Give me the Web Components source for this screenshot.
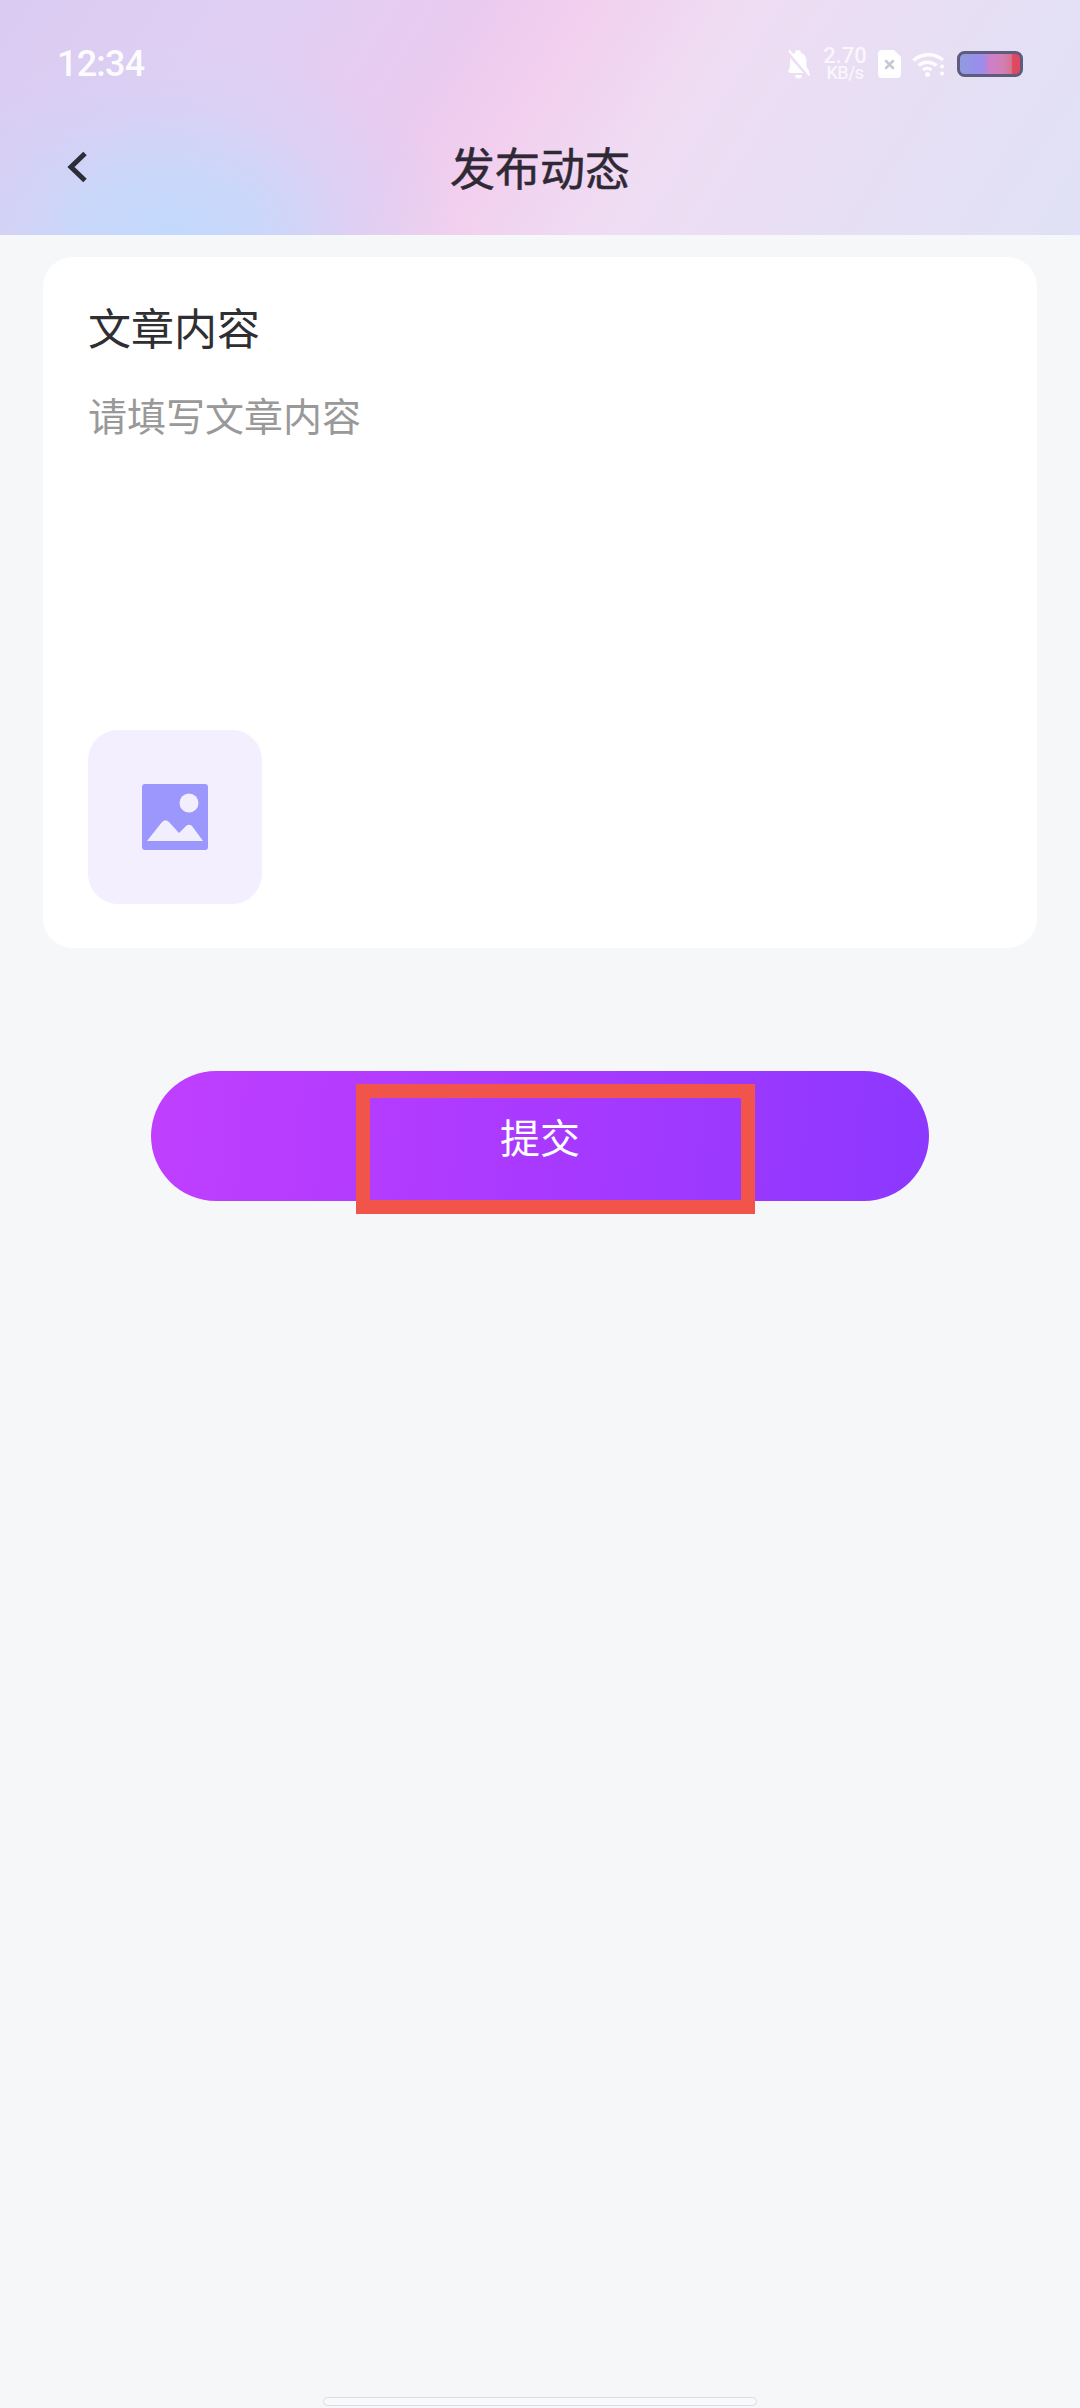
<!DOCTYPE html>
<html lang="zh-CN">
<head>
<meta charset="utf-8">
<title>发布动态</title>
<style>
  html, body { margin: 0; padding: 0; background: #f5f6f8; }
  body { font-family: "Noto Sans CJK SC", "Noto Sans", sans-serif; }
</style>
</head>
<body>
<post-page>
  <post-header slot="header" title="发布动态"></post-header>
  <post-card heading="文章内容" placeholder="请填写文章内容"></post-card>
  <submit-button>提交</submit-button>
</post-page>

<script>
class PostPage extends HTMLElement {
  constructor() {
    super();
    this.shadowDOM = this.attachShadow({ mode: 'open' });
    this.shadowDOM.innerHTML = `
    <style>
    :host{
      display: flex;
      flex-direction: column;
      width: 1080px;
      height: 2408px;
      overflow: hidden;
      background: #f6f7f9;
    }
    .home{
      margin: auto auto 2px;
      width: 434px;
      height: 9px;
      box-sizing: border-box;
      background: #f8f9fc;
      border: 1.5px solid #dcdde0;
      border-radius: 5px;
    }
    </style>
    <slot name="header"></slot>
    <slot></slot>
    <div class="home"></div>
    `;
  }
}

class PostHeader extends HTMLElement {
  constructor() {
    super();
    this.shadowDOM = this.attachShadow({ mode: 'open' });
  }

  connectedCallback() {
    this.shadowDOM.innerHTML = `
    <style>
    :host{
      display: block;
      height: 235px;
      box-sizing: border-box;
      padding-top: 46px;
      background:
        radial-gradient(ellipse 290px 190px at 170px 235px, #c2d9fc 0%, rgba(196,217,251,.85) 30%, rgba(200,214,248,.35) 65%, rgba(200,214,248,0) 100%),
        linear-gradient(122deg, #dacbf2 0%, #e1cff3 24%, #ebcbf0 40%, #f2cfee 48%, #efdcf3 60%, #e7dff4 78%, #e0e1f6 100%);
    }
    .status{
      display: flex;
      align-items: center;
      height: 36px;
      padding: 0 57px;
      color: #fff;
    }
    .time{
      font: 500 36px/36px Roboto, sans-serif;
      letter-spacing: -0.8px;
      opacity: .92;
    }
    .icons{
      display: flex;
      align-items: center;
      margin-left: auto;
    }
    .speed{
      display: block;
      width: 44px;
      margin: 0 11px 0 13px;
      text-align: center;
      white-space: pre-line;
      font: 500 18px/17px Roboto, sans-serif;
      letter-spacing: -0.5px;
      color: rgba(255,255,255,.75);
    }
    .speed::first-line{ font-size: 22px; letter-spacing: 0; }
    svg{ display: block; flex: none; }
    .nav{
      display: grid;
      grid-template-columns: 1fr auto 1fr;
      align-items: center;
      margin-top: 54px;
      padding-left: 66px;
      padding-right: 66px;
      height: 62px;
    }
    h1{
      margin: 0;
      font-size: 45px;
      line-height: 62px;
      font-weight: 400;
      -webkit-text-stroke: 0.5px #2e2935;
      color: #2e2935;
    }
    </style>
    <div class="status">
      <span class="time">12:34</span>
      <div class="icons">
        <svg width="24" height="30" viewBox="0 0 24 30">
          <path d="M12 1a3 3 0 0 1 3 3c4 1 5.500 4.500 5.500 8v6l2.500 4v2H4l-2-2 2-4v-6c0-3.500 1.500-7 5-8a3 3 0 0 1 3-3z M9 26h7a3.500 3.500 0 0 1-7 0z" fill="#fff" opacity=".92"/>
          <path d="M1 3l22 25" stroke="#ecdff3" stroke-width="3"/>
          <path d="M3 1.500l21 25" stroke="#fff" stroke-width="2"/>
        </svg>
        <span class="speed">2.70
KB/s</span>
        <svg width="23" height="28" viewBox="0 0 23 28">
          <path d="M4 0h12l7 7v17a4 4 0 0 1-4 4H4a4 4 0 0 1-4-4V4a4 4 0 0 1 4-4z" fill="#fff"/>
          <path d="M8 11l7 7M15 11l-7 7" stroke="#c9c6d6" stroke-width="2.500" stroke-linecap="round"/>
        </svg>
        <svg width="33" height="25" viewBox="0 0 33 25" fill="none" stroke="#fff" style="margin-left:11px" opacity=".92">
          <path d="M1.500 8.500C9 1.500 22 .500 31 8" stroke-width="3.500"/>
          <path d="M6.500 13.500c5-4.500 13-4.500 18 0" stroke-width="3.500"/>
          <path d="M11 18c2.500-2 6-2 8.500 0" stroke-width="3.500"/>
          <circle cx="15.500" cy="22.500" r="2.500" fill="#fff" stroke="none"/>
          <circle cx="30" cy="14.500" r="2" fill="#fff" stroke="none"/>
          <circle cx="30" cy="21.500" r="2" fill="#fff" stroke="none"/>
        </svg>
        <svg width="66" height="26" viewBox="0 0 66 26" style="margin-left:12px">
          <defs>
            <linearGradient id="batt">
              <stop offset="0" stop-color="#8f9edc"/>
              <stop offset=".32" stop-color="#9a8ced"/>
              <stop offset=".44" stop-color="#a88ae0"/>
              <stop offset=".48" stop-color="#cf7fc8"/>
              <stop offset=".72" stop-color="#d27fb4"/>
              <stop offset=".84" stop-color="#d8708f"/>
              <stop offset=".86" stop-color="#dd4a60"/>
              <stop offset="1" stop-color="#dd4a60"/>
            </linearGradient>
          </defs>
          <rect x="1.500" y="1.500" width="63" height="23" rx="6" fill="url(#batt)" stroke="#5f5b7c" stroke-width="3"/>
        </svg>
      </div>
    </div>
    <div class="nav">
      <svg width="22" height="32" viewBox="0 0 22 32" fill="none">
        <path d="M19 2.500L5 16l14 13.500" stroke="#2b2d38" stroke-width="5"/>
      </svg>
      <h1>${this.getAttribute('title')}</h1>
    </div>
    `;
  }
}

class PostCard extends HTMLElement {
  constructor() {
    super();
    this.shadowDOM = this.attachShadow({ mode: 'open' });
  }

  connectedCallback() {
    this.shadowDOM.innerHTML = `
    <style>
    :host{
      display: flex;
      flex-direction: column;
      box-sizing: border-box;
      width: 994px;
      height: 691px;
      margin: 22px 0 0 43px;
      padding: 39px 45px 44px;
      background: #fff;
      border-radius: 30px;
    }
    h2{
      margin: 0;
      font-size: 43px;
      line-height: 60px;
      font-weight: 400;
      color: #2f2f33;
    }
    p{
      margin: 28px 0 0;
      font-size: 39px;
      line-height: 60px;
      color: #999;
    }
    .tile{
      display: flex;
      align-items: center;
      justify-content: center;
      width: 174px;
      height: 174px;
      margin-top: auto;
      background: #f3effe;
      border-radius: 30px;
    }
    </style>
    <h2>${this.getAttribute('heading')}</h2>
    <p>${this.getAttribute('placeholder')}</p>
    <div class="tile">
      <svg width="66" height="66" viewBox="0 0 66 66">
        <rect width="66" height="66" rx="3" fill="#9c97fd"/>
        <circle cx="47" cy="19" r="9.500" fill="#f1eefe"/>
        <path d="M5 57L20 38q3.500-3.500 7 0L37 49 44 42q3-2.500 6 0L61 57z" fill="#f1eefe"/>
      </svg>
    </div>
    `;
  }
}

class SubmitButton extends HTMLElement {
  constructor() {
    super();
    this.shadowDOM = this.attachShadow({ mode: 'open' });
    this.shadowDOM.innerHTML = `
    <style>
    :host{
      display: block;
      position: relative;
      width: 778px;
      height: 130px;
      margin: 123px 0 0 151px;
    }
    .btn{
      display: flex;
      align-items: center;
      justify-content: center;
      height: 100%;
      border-radius: 65px;
      background: linear-gradient(95deg, #c03fff 0%, #a939ff 50%, #8c38ff 100%);
      color: #fff;
      font-size: 40px;
    }
    .mark{
      position: absolute;
      left: 205px;
      top: 13px;
      width: 399px;
      height: 130px;
      box-sizing: border-box;
      border: 14px solid #f0544b;
    }
    </style>
    <div class="btn"><slot></slot></div>
    <div class="mark"></div>
    `;
  }
}

customElements.define('post-page', PostPage);
customElements.define('post-header', PostHeader);
customElements.define('post-card', PostCard);
customElements.define('submit-button', SubmitButton);
</script>
</body>
</html>
